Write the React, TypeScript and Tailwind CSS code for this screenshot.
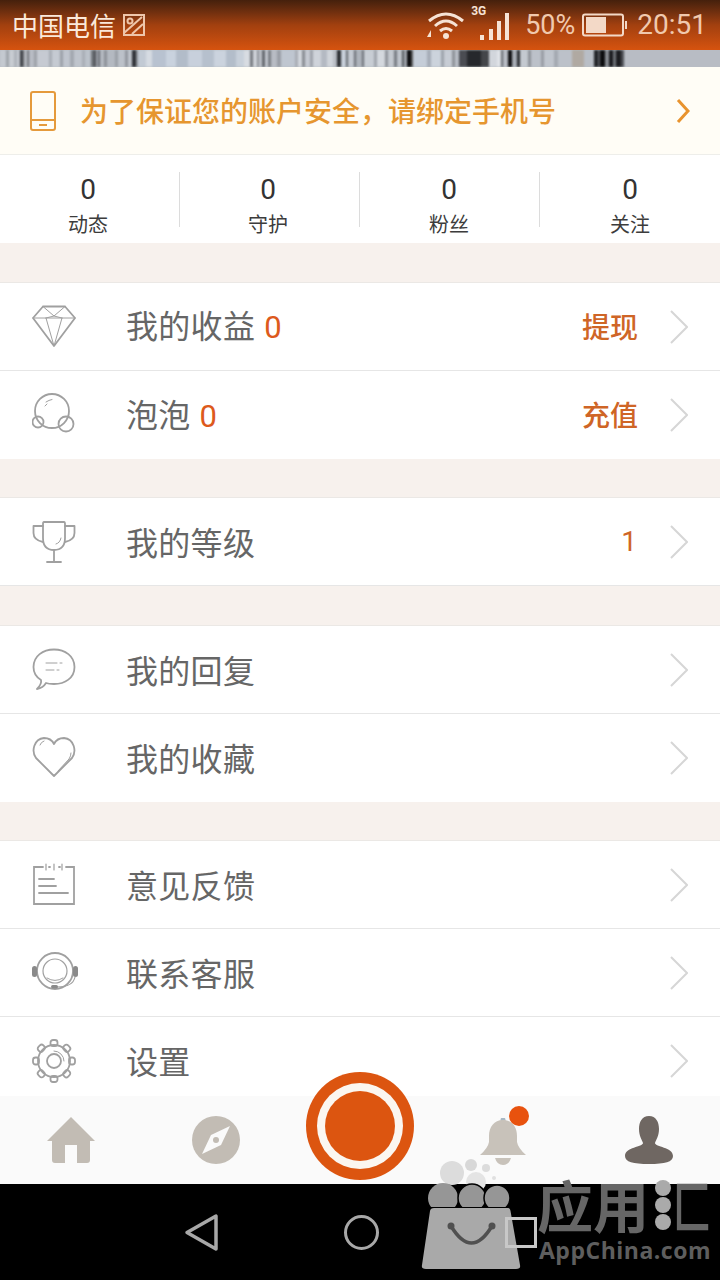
import React from "react";

const cjk = "font-['Noto_Sans_CJK_SC','Noto_Sans',sans-serif]";

const stripes: [string, number][] = [
  ["#c4c9d0", 6], ["#9ea3aa", 3], ["#c8ccd2", 5], ["#aeb3ba", 3], ["#c4c8cf", 3], ["#3c3f44", 3], ["#8f9298", 2], ["#c2c6cc", 2], ["#6f7278", 2], ["#b8bcc4", 5],
  ["#9da1a8", 3], ["#c6cad2", 12], ["#a8adb5", 3], ["#c5cad2", 8], ["#9ba0a8", 3], ["#c0c5ce", 7], ["#a3a8b0", 4], ["#bfc4cc", 8], ["#a8adb5", 3], ["#bcc2ca", 6],
  ["#6e7278", 3], ["#4a4d52", 2], ["#a6abb3", 2], ["#666a70", 2], ["#b5bac2", 4], ["#8d9198", 3], ["#b4b9c1", 8], ["#9a9fa6", 3], ["#bcc1c9", 7], ["#92969e", 3],
  ["#c0c5cd", 4], ["#2f3136", 4], ["#8f939a", 2], ["#c2cad4", 8], ["#d6dbe2", 6], ["#b8c2d0", 14], ["#c9d2de", 10], ["#b2bcc9", 12], ["#c8d0dc", 14], ["#b6c0cd", 12],
  ["#cbd3de", 12], ["#b3bdca", 10], ["#c8d0da", 8], ["#d8dce2", 6], ["#74787e", 3], ["#d0d4da", 4], ["#8c9096", 2], ["#c0c4cc", 3], ["#62666c", 3], ["#c6cad2", 3], ["#7a7e84", 3],
  ["#b8bcc4", 6], ["#9a9ea6", 4], ["#bfc6d0", 14], ["#a8acb4", 3], ["#d4d8de", 4], ["#888c92", 3], ["#c6cad2", 5], ["#9ea2aa", 3], ["#cfd3da", 8], ["#b4b9c2", 6], ["#d0d4da", 6],
  ["#b9bdc4", 4], ["#2a2c30", 4], ["#c8d0da", 5], ["#64686e", 2], ["#c4c9d1", 6], ["#696d74", 2], ["#aeb3bb", 6], ["#696d74", 2], ["#c8cdd4", 10], ["#9fa4ac", 3], ["#d4d8de", 8],
  ["#8f939a", 3], ["#c4c9d0", 6], ["#777b82", 3], ["#bfc4cc", 5], ["#50545a", 2], ["#a7acb4", 3], ["#0a0a0c", 4], ["#555", 2], ["#c5cdd8", 14], ["#a5acb7", 4], ["#ccd3dc", 10],
  ["#9ca2aa", 3], ["#c7ccd4", 8], ["#8e9298", 3], ["#b9bec6", 4], ["#4a4c52", 8], ["#26282c", 14], ["#44464a", 8], ["#d2d6dc", 8], ["#e0e3e8", 4], ["#62666c", 2], ["#b8bcc4", 5], ["#0e0e10", 4],
  ["#a8adb5", 5], ["#2a2c30", 3], ["#c4c9d0", 8], ["#8e9298", 3], ["#bcc1c9", 10], ["#989ca4", 3], ["#c0c5cd", 10], ["#a4a9b1", 4], ["#bcc1c9", 14], ["#b0a9a2", 12], ["#b9bec6", 10],
  ["#202226", 4], ["#5a5c62", 2], ["#0c0c0e", 5], ["#8a8e94", 4], ["#1a1a1e", 4], ["#70747a", 3], ["#1c1c20", 5], ["#4c4e54", 3],
];

function Chevron({ color = "#d6d6d6" }: { color?: string }) {
  return (
    <svg width="18" height="34" viewBox="0 0 18 34" fill="none" stroke={color} strokeWidth="2">
      <path d="M1 1 L17 17 L1 33" />
    </svg>
  );
}

const g = { fill: "none", stroke: "#a0a0a0", strokeWidth: 1.8, strokeLinejoin: "round" as const, strokeLinecap: "round" as const };

function Diamond() {
  return (
    <svg width="44" height="44" viewBox="0 0 44 44" {...g}>
      <path d="M11 1.5 H33 L43 13 L22 41 L1 13 Z" />
      <path d="M1 13 H43 M11 1.5 L22 11 L33 1.5 M14 13 L22 41 L30 13 M14 13 L22 11 L30 13" strokeWidth="1" />
    </svg>
  );
}
function Bubbles() {
  return (
    <svg width="44" height="44" viewBox="0 0 44 44" {...g}>
      <circle cx="20" cy="18" r="17" />
      <circle cx="6" cy="29" r="5.5" />
      <circle cx="34" cy="31" r="7.5" />
      <path d="M14 9 Q17 7 20 6.5 M13 13 L15 11" strokeWidth="1" />
    </svg>
  );
}
function Trophy() {
  return (
    <svg width="44" height="44" viewBox="0 0 44 44" {...g}>
      <path d="M12 2 H32 Q33 2 33 4 V18 Q33 30 22 30 Q11 30 11 18 V4 Q11 2 12 2 Z" />
      <path d="M11 6 H1.5 V13 Q1.5 20 11 22 M33 6 H42.5 V13 Q42.5 20 33 22" />
      <path d="M22 30 V42 M15 42 H29" />
      <path d="M24 24 Q28 23 29 18" strokeWidth="1" />
    </svg>
  );
}
function Speech() {
  return (
    <svg width="44" height="44" viewBox="0 0 44 44" {...g}>
      <path d="M22 1.5 C33 1.5 42.5 8 42.5 19 C42.5 30 33 36 22 36 C19 36 16.5 36 14 35 Q11 40 5 41 Q10 36 9 32 C4 29 1.5 25 1.5 19 C1.5 8 11 1.5 22 1.5 Z" />
      <path d="M14 15 H25 M28 15 H30 M14 22 H22 M25 22 H27" strokeWidth="1" />
    </svg>
  );
}
function Heart() {
  return (
    <svg width="44" height="44" viewBox="0 0 44 44" {...g}>
      <path d="M22 40 L4 22 C-1 15 2 3 12 2 C16.5 2 20 4 22 8 C24 4 27.5 2 32 2 C42 3 45 15 40 22 Z" />
      <path d="M8 9 Q9 6 12 5 M26 35 L37 23 Q39 20 39 17" strokeWidth="1" />
    </svg>
  );
}
function Note() {
  return (
    <svg width="44" height="44" viewBox="0 0 44 44" {...g} strokeLinejoin="miter">
      <path d="M11 4 H2 V41 H42 V4 H34 M17 4 H18 M27 4 H28" />
      <path d="M14 1 V7 M22 1 V7 M30 1 V7" strokeWidth="1.2" />
      <path d="M7 16 H22 M7 23 H24 M7 30 H36" />
    </svg>
  );
}
function Headset() {
  return (
    <svg width="46" height="44" viewBox="0 0 46 44" {...g}>
      <circle cx="23" cy="20" r="18" />
      <circle cx="23" cy="20" r="12" strokeWidth="1.2" />
      <path d="M15 27 Q23 32 31 27" strokeWidth="1" />
      <rect x="0" y="15" width="5" height="11" rx="2.5" fill="#8a8a8a" stroke="none" />
      <rect x="41" y="15" width="5" height="11" rx="2.5" fill="#8a8a8a" stroke="none" />
      <path d="M43 26 Q41 36 25 36" strokeWidth="1.2" />
      <rect x="19" y="34" width="7" height="3.5" rx="1.7" fill="#8a8a8a" stroke="none" />
    </svg>
  );
}
function Gear() {
  const a = [0, 45, 90, 135, 180, 225, 270, 315];
  return (
    <svg width="44" height="44" viewBox="0 0 44 44" {...g}>
      <circle cx="22" cy="22" r="16" />
      <circle cx="22" cy="22" r="7" />
      <path d="M22 12 A10 10 0 0 1 32 22" strokeWidth="1" />
      {a.map((d) => (
        <rect key={d} x="18.5" y="1" width="7" height="6" rx="2.5" transform={`rotate(${d} 22 22)`} />
      ))}
    </svg>
  );
}

function Row({ icon, label, num, action, level, border = true }: { icon: React.ReactNode; label: string; num?: string; action?: string; level?: string; border?: boolean }) {
  return (
    <div className={`h-[88px] shrink-0 flex items-center bg-white pl-[32px] pr-[32px] ${border ? "border-b border-[#e6e6e6]" : ""}`}>
      <div className="w-[95px] shrink-0 flex items-center">{icon}</div>
      <div className={`flex-1 -ml-[1px] -mt-[2px] flex items-baseline text-[32px] leading-none tracking-[0.3px] text-[#666] ${cjk}`}>
        {label}
        {num && <span className="ml-[9px] text-[#dd5a1c] font-['Roboto',sans-serif] text-[31px]">{num}</span>}
      </div>
      {action && <span className={`-mt-[2px] text-[28px] leading-none text-[#cf6526] ${cjk} font-medium mr-[32px]`}>{action}</span>}
      {level && <span className="text-[28px] leading-none text-[#cf6526] font-['Roboto',sans-serif] mr-[33px]">{level}</span>}
      <Chevron />
    </div>
  );
}

const Gap = ({ h }: { h: string }) => <div className={`${h} shrink-0 bg-[#f7f1ed] border-b border-[#ebe8e5]`} />;

function Stat({ n, l, div, shift }: { n: string; l: string; div?: boolean; shift?: string }) {
  return (
    <div className="relative flex flex-col items-center pt-[19px]">
      <div className={`flex flex-col items-center ${shift ?? ""}`}>
        <span className="text-[28px] leading-[32px] text-[#333] font-['Roboto',sans-serif]">{n}</span>
        <span className={`text-[20px] leading-[26px] mt-[5px] text-[#3c3c3c] ${cjk}`}>{l}</span>
      </div>
      {div && <div className="absolute right-0 top-[17px] h-[55px] w-px bg-[#dcdcdc]" />}
    </div>
  );
}

export default function App() {
  return (
    <div className="relative w-[720px] h-[1280px] overflow-hidden flex flex-col bg-white">
      {/* Status bar */}
      <div className="h-[50px] shrink-0 flex items-center pl-[12px] pr-[13px] bg-gradient-to-b from-[#45200c] via-[#a2400f] to-[#d6530f]">
        <span className={`text-[26px] leading-none text-[#fbe9da] ${cjk}`}>中国电信</span>
        <svg className="ml-[6px]" width="24" height="24" viewBox="0 0 24 24" fill="none" stroke="#eec6ab" strokeWidth="2">
          <rect x="2" y="2" width="20" height="20" />
          <circle cx="8" cy="8" r="2.5" />
          <path d="M2 20 L20 4 M10 21 L21 11" />
        </svg>
        <div className="flex-1" />
        <svg width="40" height="30" viewBox="0 0 40 30" fill="none" stroke="#f6e3d5" strokeWidth="3">
          <path d="M3 11 Q20 -3 37 11 M9 16 Q20 6 31 16 M14 21 Q20 16 26 21" />
          <circle cx="20" cy="26" r="3" fill="#f6e3d5" stroke="none" />
          <path d="M1 27 L5 20 V27 Z" fill="#f6e3d5" stroke="none" />
        </svg>
        <div className="relative w-[42px] h-[36px] ml-[5px]">
          <span className="absolute left-0 -top-[2px] text-[12px] leading-none font-bold text-[#f6e3d5] font-['Roboto',sans-serif]">3G</span>
          <svg className="absolute left-0 top-0" width="42" height="36" viewBox="0 0 42 36" fill="#f6e3d5">
            <rect x="9" y="28" width="4" height="5" />
            <rect x="18" y="22" width="4" height="11" />
            <rect x="26" y="14" width="4" height="19" />
            <rect x="34" y="6" width="4" height="27" />
          </svg>
        </div>
        <span className="ml-[12px] text-[27px] leading-none text-[#f0c9ae] font-['Roboto',sans-serif]">50%</span>
        <svg className="ml-[7px]" width="46" height="24" viewBox="0 0 46 24" fill="none">
          <rect x="1" y="1.5" width="40" height="21" rx="2" stroke="#f3d9c7" strokeWidth="2" />
          <rect x="4" y="4" width="20" height="16" fill="#f3d9c7" />
          <rect x="43" y="8" width="2" height="8" fill="#f3d9c7" />
        </svg>
        <span className="ml-[9px] text-[28px] leading-none text-[#f0c9ae] font-['Roboto',sans-serif]">20:51</span>
      </div>

      {/* Cover image strip */}
      <div className="h-[17px] shrink-0 overflow-hidden bg-[#b8bcc4]">
        <div className="flex h-full w-[720px] blur-[1px]">
          {stripes.map(([c, w], i) => (
            <div key={i} className="h-full shrink-0" style={{ background: c, width: w }} />
          ))}
        </div>
      </div>

      <div className="flex-1 overflow-hidden flex flex-col">
        {/* Banner */}
        <div className="h-[88px] shrink-0 flex items-center pl-[30px] pr-[30px] bg-[#fffdf6] border-b border-[#eeeeea]">
          <svg className="shrink-0" width="26" height="40" viewBox="0 0 26 40" fill="none" stroke="#e59a3c" strokeWidth="2">
            <rect x="1" y="1" width="24" height="38" rx="2" />
            <path d="M1 29 H25 M9 34 H17" />
          </svg>
          <span className={`ml-[24px] -mt-[2px] flex-1 text-[28px] leading-none font-medium text-[#e6962f] ${cjk}`}>为了保证您的账户安全，请绑定手机号</span>
          <svg width="14" height="26" viewBox="0 0 14 26" fill="none" stroke="#e8932e" strokeWidth="3">
            <path d="M2 2 L12 13 L2 24" />
          </svg>
        </div>

        {/* Stats */}
        <div className="h-[88px] shrink-0 grid grid-cols-4 bg-white">
          <Stat n="0" l="动态" div shift="-ml-[4px]" />
          <Stat n="0" l="守护" div shift="-ml-[4px]" />
          <Stat n="0" l="粉丝" div shift="-ml-[2px]" />
          <Stat n="0" l="关注" />
        </div>

        <Gap h="h-[40px]" />
        <Row icon={<Diamond />} label="我的收益" num="0" action="提现" />
        <Row icon={<Bubbles />} label="泡泡" num="0" action="充值" border={false} />
        <Gap h="h-[39px]" />
        <Row icon={<Trophy />} label="我的等级" level="1" />
        <Gap h="h-[40px]" />
        <Row icon={<Speech />} label="我的回复" />
        <Row icon={<Heart />} label="我的收藏" border={false} />
        <Gap h="h-[39px]" />
        <Row icon={<Note />} label="意见反馈" />
        <Row icon={<Headset />} label="联系客服" />
        <Row icon={<Gear />} label="设置" />
      </div>

      {/* Tab bar */}
      <div className="relative h-[88px] shrink-0 bg-[#fafafa] grid grid-cols-5 items-center">
        <div className="flex justify-center pr-[2px]">
          <svg width="48" height="46" viewBox="0 0 48 46" fill="#c2bcb4">
            <path d="M24 0 L48 24 H43 V43 Q43 46 40 46 H30 V28 H18 V46 H8 Q5 46 5 43 V24 H0 Z" />
          </svg>
        </div>
        <div className="flex justify-center">
          <svg width="48" height="48" viewBox="0 0 48 48">
            <circle cx="24" cy="24" r="24" fill="#c2bcb4" />
            <path d="M38 10 L29 29 L10 38 L19 19 Z" fill="#fafafa" />
            <circle cx="24" cy="24" r="3" fill="#c2bcb4" />
          </svg>
        </div>
        <div />
        <div className="flex justify-center">
          <svg width="46" height="47" viewBox="0 0 46 47" fill="#c8c2ba" className="ml-[-2px] mt-[2px]">
            <circle cx="23" cy="2" r="2.5" fill="#a8b8c4" />
            <path d="M23 2 C32 2 37 9 37 18 V24 Q38 30 46 37 H0 Q8 30 9 24 V18 C9 9 14 2 23 2 Z" />
            <path d="M15 40 H31 Q29 47 23 47 Q17 47 15 40 Z" />
          </svg>
        </div>
        <div className="flex justify-center pl-[2px]">
          <svg width="48" height="48" viewBox="0 0 48 48" fill="#6f6762">
            <path d="M24 0 C31 0 34 6 34 13 C34 20 31 24 30 27 C30 31 48 31 48 40 C48 46 40 48 24 48 C8 48 0 46 0 40 C0 31 18 31 18 27 C17 24 14 20 14 13 C14 6 17 0 24 0 Z" />
          </svg>
        </div>
        <div className="absolute left-[509px] top-[10px] w-[20px] h-[20px] rounded-full bg-[#e8520e]" />
      </div>

      {/* Nav bar */}
      <div className="h-[96px] shrink-0 bg-black relative flex items-center">
        <svg className="absolute left-[184px] top-[29px]" width="36" height="40" viewBox="0 0 36 40" fill="none" stroke="#a8a8a8" strokeWidth="3.5" strokeLinejoin="round">
          <path d="M32 3 V36 L3 19.5 Z" />
        </svg>
        <div className="absolute left-[344px] top-[31px] w-[35px] h-[35px] rounded-full border-[3.5px] border-[#a8a8a8]" />
      </div>

      {/* Record button */}
      <div className="absolute left-[306px] top-[1072px] w-[108px] h-[108px] rounded-full bg-[#dc5510] flex items-center justify-center">
        <div className="w-[86px] h-[86px] rounded-full bg-[#fbf6f0] flex items-center justify-center">
          <div className="w-[70px] h-[70px] rounded-full bg-[#dc5510]" />
        </div>
      </div>

      {/* Watermark */}
      <svg className="absolute left-[420px] top-[1155px]" width="105" height="120" viewBox="0 0 105 120">
        <circle cx="32" cy="18" r="12" fill="#dcdcdc" />
        <circle cx="51" cy="10" r="6" fill="#d8d8d8" />
        <circle cx="66" cy="13" r="4" fill="#dcdcdc" />
        <circle cx="56" cy="27" r="10" fill="#e4e4e4" />
        <circle cx="74" cy="23" r="2" fill="#e0e0e0" />
        <circle cx="23" cy="43" r="15" fill="#969696" />
        <circle cx="52" cy="43" r="14" fill="#969696" stroke="#000" strokeWidth="1.5" />
        <circle cx="77" cy="43" r="13" fill="#969696" stroke="#000" strokeWidth="1.5" />
        <rect x="0" y="52" width="100" height="8" fill="#000" />
        <path d="M14 53 H88 Q90 53 90.5 56 L100 110 Q101 114 96 114 H6 Q1 114 2 110 L10 56 Q10.5 53 14 53 Z" fill="#a9a9a9" />
        <path d="M31 71 Q51.5 105 72 71" fill="none" stroke="#505050" strokeWidth="3.5" />
        <circle cx="31" cy="71" r="3.5" fill="#505050" />
        <circle cx="72" cy="71" r="3.5" fill="#505050" />
      </svg>
      <div className="absolute left-[505px] top-[1217px] w-[32px] h-[31px] border-[3.5px] border-[#c8c8c8]" />
      <div className={`absolute left-[537px] top-[1176px] text-[56px] leading-[56px] font-bold text-[#666] ${cjk}`}>应用</div>
      <div className="absolute left-[655px] top-[1180px] flex flex-col gap-[1px]">
        <div className="w-[16px] h-[16px] rounded-full bg-[#aaa]" />
        <div className="w-[16px] h-[16px] rounded-full bg-[#aaa]" />
        <div className="w-[16px] h-[16px] rounded-full bg-[#aaa]" />
      </div>
      <div className={`absolute left-[673px] top-[1176px] text-[56px] leading-[56px] font-bold text-[#666] origin-left scale-x-[0.68] ${cjk}`}>匚</div>
      <div className="absolute left-[539px] top-[1236px] text-[23px] leading-[28px] font-bold tracking-[0.5px] text-[#5e5e5e] font-['Open_Sans',sans-serif]">AppChina.com</div>
    </div>
  );
}
